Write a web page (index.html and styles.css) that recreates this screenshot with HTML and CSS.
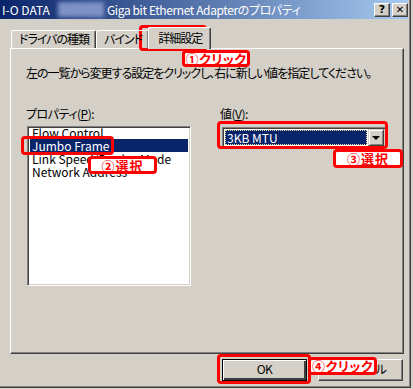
FILE: index.html
```html
<!DOCTYPE html>
<html lang="ja">
<head>
  <meta charset="UTF-8">
  <title>プロパティ</title>
  <link rel="stylesheet" href="styles.css">
</head>
<body>

  <div class="window">
    <div class="titlebar">
      <span class="title-vendor">I-O DATA</span>
      <span class="title-blur"></span>
      <span class="title-text">Giga bit Ethernet Adapterのプロパティ</span>
      <span class="caption-btn">?</span>
      <span class="caption-btn close">&#x2715;</span>
    </div>

    <div class="tabs">
      <div class="tab">ドライバの種類</div>
      <div class="tab">バインド</div>
      <div class="tab active">詳細設定</div>
    </div>

    <div class="panel">
      <p class="hint">左の一覧から変更する設定をクリックし、右に新しい値を指定してください。</p>
      <div class="columns">
        <div class="col-left">
          <div class="label">プロパティ(<u>P</u>):</div>
          <div class="listbox">
            <div class="item">Flow Control</div>
            <div class="item selected">Jumbo Frame</div>
            <div class="item">Link Speed/Duplex Mode</div>
            <div class="item">Network Address</div>
          </div>
        </div>
        <div class="col-right">
          <div class="label">値(<u>V</u>):</div>
          <div class="combo">
            <div class="combo-value"><span>3KB MTU</span></div>
            <div class="combo-btn"><span class="arrow"></span></div>
          </div>
        </div>
      </div>
    </div>

    <div class="footer">
      <div class="button default">OK</div>
      <div class="button">キャンセル</div>
    </div>
  </div>

  <!-- annotations -->
  <div class="mark mark-tab"></div>
  <div class="note note-1">①クリック</div>
  <div class="mark mark-item"></div>
  <div class="note note-2">②選択</div>
  <div class="mark mark-combo"></div>
  <div class="note note-3">③選択</div>
  <div class="mark mark-ok"></div>
  <div class="note note-4">④クリック</div>

</body>
</html>
```

FILE: styles.css
```css
body {
  margin: 0;
  width: 413px;
  height: 389px;
  overflow: hidden;
  position: relative;
  background-color: #d4d0c8;
  color: #000;
  font-family: "Noto Sans CJK JP", "DejaVu Sans", sans-serif;
  font-size: 12px;
  font-feature-settings: "palt";
}
.window {
  box-sizing: border-box;
  width: 411px;
  height: 388px;
  border-right: 1px solid #404040;
  border-bottom: 1px solid #404040;
  box-shadow: inset -1px -1px 0 #808080;
}
.titlebar {
  height: 19px;
  margin-right: 2px;
  display: flex;
  align-items: center;
  color: #fff;
  background: linear-gradient(to right, #0a246a, #a6caf0);
  line-height: 19px;
  white-space: nowrap;
}
.title-vendor {
  margin-left: 2px;
  width: 56px;
}
.title-blur {
  width: 46px;
  height: 15px;
  margin-right: 3px;
  background-color: #7f92c6;
  filter: blur(2px);
}
.title-text {
  flex: 1;
  letter-spacing: -0.4px;
}
.caption-btn {
  box-sizing: border-box;
  width: 16px;
  height: 14px;
  margin-right: 2px;
  background-color: #d4d0c8;
  color: #000;
  font-family: "DejaVu Sans", sans-serif;
  font-weight: bold;
  font-size: 11px;
  line-height: 12px;
  text-align: center;
  border-top: 1px solid #fff;
  border-left: 1px solid #fff;
  border-right: 1px solid #404040;
  border-bottom: 1px solid #404040;
  box-shadow: inset -1px -1px 0 #808080;
}
.caption-btn.close {
  margin-right: 0;
  font-size: 10px;
}
.tabs {
  display: flex;
  align-items: flex-end;
  height: 29px;
  padding-left: 11px;
  position: relative;
  z-index: 1;
  letter-spacing: -1px;
}
.tab {
  box-sizing: border-box;
  height: 18px;
  padding: 0 6px 0 7px;
  line-height: 16px;
  border-top: 1px solid #fff;
  border-left: 1px solid #fff;
  border-right: 1px solid #404040;
  border-radius: 2px 2px 0 0;
  box-shadow: inset -1px 0 0 #808080;
}
.tab.active {
  height: 22px;
  margin-left: -1px;
  margin-bottom: -1px;
  padding: 2px 8px 0 9px;
  background-color: #d4d0c8;
}
.panel {
  box-sizing: border-box;
  width: 394px;
  height: 306px;
  margin-left: 10px;
  padding: 16px 15px 0;
  border-top: 1px solid #fff;
  border-left: 1px solid #fff;
  border-right: 1px solid #404040;
  border-bottom: 1px solid #404040;
  box-shadow: inset -1px -1px 0 #808080;
}
.hint {
  margin: 0;
  line-height: 16px;
  white-space: nowrap;
  letter-spacing: -1px;
}
.columns {
  display: flex;
  margin-top: 25px;
}
.col-left {
  width: 194px;
}
.label {
  line-height: 16px;
  height: 20px;
  letter-spacing: -0.5px;
}
.col-right .label {
  height: 21px;
}
.listbox {
  box-sizing: border-box;
  width: 164px;
  height: 160px;
  margin-left: 1px;
  padding: 0 2px;
  background-color: #fff;
  border-top: 1px solid #808080;
  border-left: 1px solid #808080;
  border-right: 1px solid #fff;
  border-bottom: 1px solid #fff;
  box-shadow: inset 1px 1px 0 #404040, inset -1px -1px 0 #d4d0c8;
  overflow: hidden;
}
.item {
  height: 13px;
  line-height: 13px;
  padding-left: 2px;
  white-space: nowrap;
}
.item:first-child {
  margin-top: -1px;
}
.item.selected {
  background-color: #0a246a;
  color: #fff;
}
.combo {
  box-sizing: border-box;
  display: flex;
  width: 164px;
  height: 21px;
  margin-left: 2px;
  padding: 2px;
  background-color: #fff;
  border-top: 1px solid #808080;
  border-left: 1px solid #808080;
  border-right: 1px solid #fff;
  border-bottom: 1px solid #fff;
  box-shadow: inset 1px 1px 0 #404040, inset -1px -1px 0 #d4d0c8;
}
.combo-value {
  flex: 1;
  padding-right: 1px;
}
.combo-value span {
  display: block;
  height: 15px;
  line-height: 15px;
  padding-left: 2px;
  background-color: #0a246a;
  color: #fff;
  outline: 1px dotted #f0e0a0;
  outline-offset: -1px;
}
.combo-btn {
  box-sizing: border-box;
  width: 16px;
  height: 17px;
  margin-top: -1px;
  margin-right: -1px;
  display: flex;
  align-items: center;
  justify-content: center;
  background-color: #d4d0c8;
  border-top: 1px solid #d4d0c8;
  border-left: 1px solid #d4d0c8;
  border-right: 1px solid #404040;
  border-bottom: 1px solid #404040;
  box-shadow: inset 1px 1px 0 #fff, inset -1px -1px 0 #808080;
}
.arrow {
  width: 0;
  height: 0;
  border-left: 4px solid transparent;
  border-right: 4px solid transparent;
  border-top: 4px solid #000;
}
.footer {
  display: flex;
  gap: 11px;
  padding: 5px 0 0 222px;
}
.button {
  box-sizing: border-box;
  width: 85px;
  height: 22px;
  line-height: 18px;
  text-align: center;
  letter-spacing: -0.5px;
  border-top: 1px solid #fff;
  border-left: 1px solid #fff;
  border-right: 1px solid #404040;
  border-bottom: 1px solid #404040;
  box-shadow: inset -1px -1px 0 #808080;
}
.button.default {
  border: 1px solid #000;
  box-shadow: inset 1px 1px 0 #fff, inset -2px -2px 0 #404040;
}

/* annotations */
.mark {
  position: absolute;
  box-sizing: border-box;
  border: 3px solid #ff0000;
  border-radius: 4px;
}
.mark-tab { left: 139px; top: 25px; width: 68px; height: 26px; }
.mark-item { left: 21px; top: 136px; width: 93px; height: 19px; }
.mark-combo { left: 217px; top: 121px; width: 171px; height: 28px; }
.mark-ok { left: 217px; top: 354px; width: 94px; height: 30px; }
.note {
  position: absolute;
  box-sizing: border-box;
  border: 3px solid #ff0000;
  border-radius: 4px;
  background-color: #fff;
  color: #ff0000;
  font-weight: bold;
  font-size: 13px;
  line-height: 12px;
  text-align: center;
  letter-spacing: 0.5px;
  white-space: nowrap;
}
.note-1 { left: 182px; top: 50px; width: 68px; height: 17px; }
.note-2 { left: 88px; top: 156px; width: 69px; height: 18px; line-height: 13px; letter-spacing: 1px; }
.note-3 { left: 333px; top: 149px; width: 70px; height: 19px; line-height: 14px; letter-spacing: 1px; }
.note-4 { left: 308px; top: 357px; width: 69px; height: 18px; line-height: 12px; }
```
